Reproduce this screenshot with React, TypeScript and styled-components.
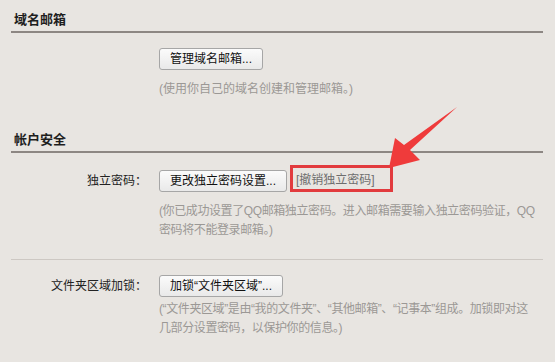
import styled, { createGlobalStyle } from "styled-components";

const GlobalStyle = createGlobalStyle`
  html, body {
    margin: 0;
    padding: 0;
    background: #e8e5e1;
  }
  body {
    font-family: "Liberation Sans", "Noto Sans CJK SC", sans-serif;
    font-size: 12px;
    color: #222;
  }
`;

const Page = styled.div`
  position: relative;
  height: 362px;
  padding: 0 12px 0 11px;
  overflow: hidden;
`;

const SectionTitle = styled.h2<{ top: number }>`
  margin: ${(p) => p.top}px 0 0;
  padding: 9px 0 0 3px;
  height: 22px;
  line-height: 22px;
  font-size: 13px;
  font-weight: bold;
  color: #1e1e1e;
  border-bottom: 2px solid #8d8783;
`;

const Divider = styled.hr`
  margin: 19px 0 0;
  border: none;
  border-top: 1px solid #cdc8c3;
  height: 0;
`;

const Row = styled.div<{ top: number }>`
  display: flex;
  align-items: flex-end;
  margin-top: ${(p) => p.top}px;
`;

const Label = styled.div`
  width: 148px;
  box-sizing: border-box;
  padding-right: 12px;
  text-align: right;
  line-height: 22px;
  color: #222;
  white-space: nowrap;
`;

const Button = styled.button`
  height: 22px;
  padding: 0 10px;
  border: 1px solid #a6a6a6;
  border-radius: 3px;
  background: linear-gradient(#fbfbfb, #e9e9e9);
  font-family: inherit;
  font-size: 12px;
  color: #111;
  line-height: 20px;
  white-space: nowrap;
`;

const RevokeBox = styled.div`
  margin-left: 3px;
  height: 27px;
  width: 103px;
  box-sizing: border-box;
  border: 3px solid #e23b3e;
  display: flex;
  align-items: center;
  padding-left: 3px;
  color: #6e6e6e;
  white-space: nowrap;
`;

const Hint = styled.p<{ top: number; tight?: boolean }>`
  margin: ${(p) => p.top}px 0 0 148px;
  line-height: 19px;
  color: #9b9895;
  white-space: nowrap;
  letter-spacing: ${(p) => (p.tight ? "-0.4px" : "0")};
`;

const Arrow = styled.svg`
  position: absolute;
  left: 0;
  top: 0;
  pointer-events: none;
`;

export default function App() {
  return (
    <>
      <GlobalStyle />
      <Page>
        <SectionTitle top={0}>域名邮箱</SectionTitle>
        <Row top={15}>
          <Label />
          <Button>管理域名邮箱...</Button>
        </Row>
        <Hint top={10}>(使用你自己的域名创建和管理邮箱。)</Hint>

        <SectionTitle top={21}>帐户安全</SectionTitle>
        <Row top={12}>
          <Label>独立密码：</Label>
          <Button>更改独立密码设置...</Button>
          <RevokeBox>[撤销独立密码]</RevokeBox>
        </Row>
        <Hint top={10} tight>
          (你已成功设置了QQ邮箱独立密码。进入邮箱需要输入独立密码验证，QQ
          <br />
          密码将不能登录邮箱。)
        </Hint>

        <Divider />
        <Row top={15}>
          <Label>文件夹区域加锁：</Label>
          <Button>加锁“文件夹区域”...</Button>
        </Row>
        <Hint top={3} tight>
          (“文件夹区域”是由“我的文件夹”、“其他邮箱”、“记事本”组成。加锁即对这
          <br />
          几部分设置密码，以保护你的信息。)
        </Hint>

        <Arrow width="555" height="362" viewBox="0 0 555 362">
          <polygon
            points="457,107 410,150 420,160 389,168 395,138 404,145"
            fill="#ef3b3b"
          />
        </Arrow>
      </Page>
    </>
  );
}
